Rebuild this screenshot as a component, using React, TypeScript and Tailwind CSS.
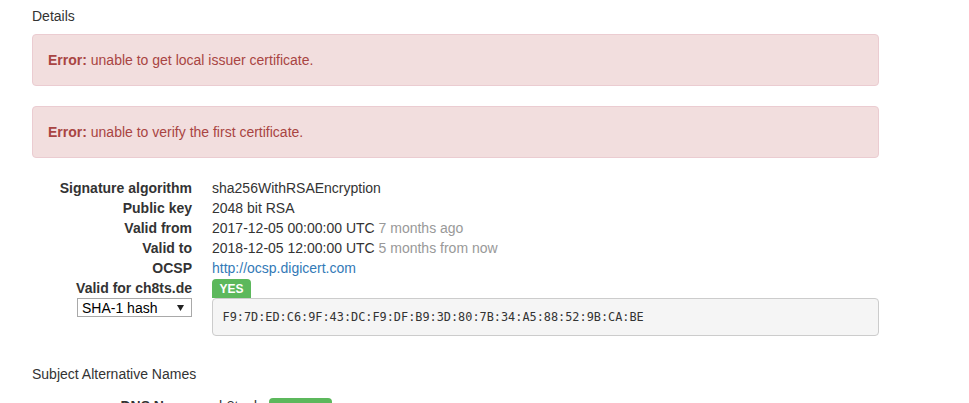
import React from "react";

function Row({ label, children }: { label: React.ReactNode; children: React.ReactNode }) {
  return (
    <>
      <dt className="text-right font-bold whitespace-nowrap">{label}</dt>
      <dd className="whitespace-nowrap">{children}</dd>
    </>
  );
}

export default function App() {
  return (
    <div className="w-[969px] h-[403px] overflow-hidden bg-white font-['Liberation_Sans',Arial,sans-serif] text-[14px] leading-[20px] text-[#333]">
      <div className="ml-[32px] w-[847px] pt-[6px]">
        <div>Details</div>
        <div className="mt-[8px] rounded-[4px] border border-[#ebccd1] bg-[#f2dede] p-[15px] text-[#a94442]">
          <b>Error:</b> unable to get local issuer certificate.
        </div>
        <div className="mt-[20px] rounded-[4px] border border-[#ebccd1] bg-[#f2dede] p-[15px] text-[#a94442]">
          <b>Error:</b> unable to verify the first certificate.
        </div>
        <dl className="mt-[20px] grid grid-cols-[160px_1fr] gap-x-[20px]">
          <Row label="Signature algorithm">sha256WithRSAEncryption</Row>
          <Row label="Public key">2048 bit RSA</Row>
          <Row label="Valid from">
            2017-12-05 00:00:00 UTC <span className="text-[#999]">7 months ago</span>
          </Row>
          <Row label="Valid to">
            2018-12-05 12:00:00 UTC <span className="text-[#999]">5 months from now</span>
          </Row>
          <Row label="OCSP">
            <span className="text-[#337ab7]">http://ocsp.digicert.com</span>
          </Row>
          <dt className="flex flex-col items-end font-bold whitespace-nowrap">
            <span>Valid for ch8ts.de</span>
            <div className="flex h-[19px] w-[115px] items-center justify-between border border-[#a9a9a9] bg-white pl-[4px] pr-[7px] font-normal text-[#000]">
              <span>SHA-1 hash</span>
              <svg width="7" height="7" viewBox="0 0 7 7">
                <polygon points="0,1 7,1 3.5,7" fill="#222" />
              </svg>
            </div>
          </dt>
          <dd className="flex flex-col items-start">
            <span className="mt-[1px] flex h-[19px] items-center rounded-t-[4px] bg-[#5cb85c] px-[7.5px] text-[12px] font-bold leading-none text-white">
              YES
            </span>
            <pre className="w-full rounded-[4px] border border-[#ccc] bg-[#f5f5f5] px-[9.5px] py-[9.5px] font-['DejaVu_Sans_Mono',monospace] text-[11.86px] leading-[17px] text-[#333]">
              F9:7D:ED:C6:9F:43:DC:F9:DF:B9:3D:80:7B:34:A5:88:52:9B:CA:BE
            </pre>
          </dd>
        </dl>
        <div className="mt-[28px]">Subject Alternative Names</div>
        <dl className="mt-[12px] grid grid-cols-[160px_1fr] gap-x-[20px]">
          <dt className="text-right font-bold whitespace-nowrap">DNS Name</dt>
          <dd className="flex items-start whitespace-nowrap">
            <span>ch8ts.de</span>
            <span className="ml-[4px] mt-[2px] flex h-[19px] items-center rounded-[4px] bg-[#5cb85c] px-[7.5px] text-[12px] font-bold leading-none text-white">
              Matches
            </span>
          </dd>
        </dl>
      </div>
    </div>
  );
}
